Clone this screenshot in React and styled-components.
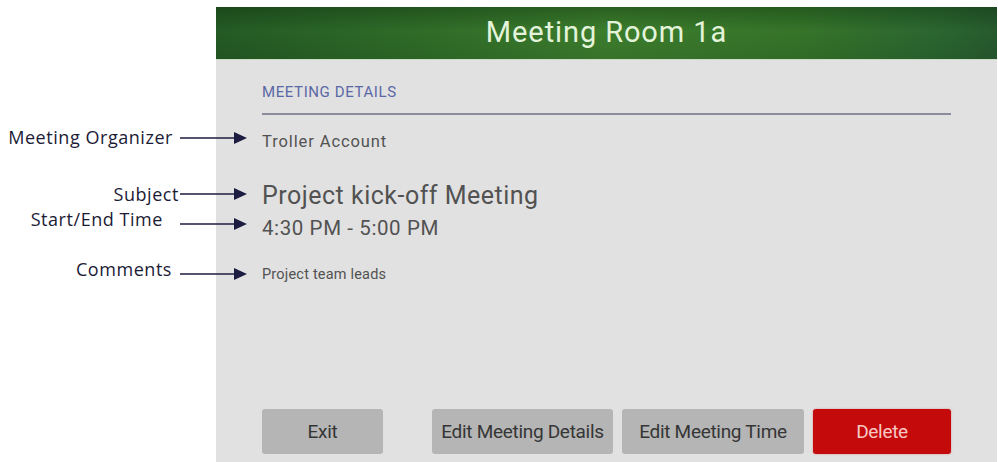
import styled, { createGlobalStyle } from 'styled-components';

const GlobalStyle = createGlobalStyle`
  html, body {
    margin: 0;
    padding: 0;
    background: #ffffff;
  }
  body {
    font-family: Roboto, "Liberation Sans", sans-serif;
    overflow: hidden;
  }
`

const fields = [
  { label: 'Meeting Organizer', text: 'Troller Account', size: 16.5, spacing: 0.9, height: 20, top: 17, gap: 7, dy: -4, ty: -1 },
  { label: 'Subject', text: 'Project kick-off Meeting', size: 25, spacing: 0.5, height: 30, top: 29, gap: 1, dy: -2, ty: 0 },
  { label: 'Start/End Time', text: '4:30 PM - 5:00 PM', size: 20.5, spacing: 0.6, height: 24, top: 5, gap: 17, dy: -4, ty: -5 },
  { label: 'Comments', text: 'Project team leads', size: 14.5, spacing: 0.2, height: 18, top: 26, gap: 8, dy: -1, ty: -5 },
]

function Arrow(){
  return (
    <svg width="67" height="14" viewBox="0 0 67 14">
      <line x1="0" y1="7" x2="56" y2="7" stroke="#1c1c40" strokeWidth="1.6" />
      <polygon points="54,1 67,7 54,13" fill="#1c1c40" />
    </svg>
  )
}

export default function App(){
  return (
    <>
      <GlobalStyle />
      <Page>
        <Panel>
          <Header>Meeting Room 1a</Header>
          <Body>
            <SectionTitle>MEETING DETAILS</SectionTitle>
            <Divider />
            {fields.map((f) => (
              <Field
                key={f.label}
                $size={f.size}
                $spacing={f.spacing}
                $height={f.height}
                $top={f.top}
              >
                <Callout $dy={f.dy}>
                  <CalloutLabel $gap={f.gap} $ty={f.ty}>{f.label}</CalloutLabel>
                  <Arrow />
                </Callout>
                {f.text}
              </Field>
            ))}
            <Actions>
              <Button $width={121}>Exit</Button>
              <ButtonGroup>
                <Button $width={181}>Edit Meeting Details</Button>
                <Button $width={182}>Edit Meeting Time</Button>
                <Button $width={138} $danger>Delete</Button>
              </ButtonGroup>
            </Actions>
          </Body>
        </Panel>
      </Page>
    </>
  )
}

const Page = styled.div`
  width: 998px;
  height: 462px;
  padding: 7px 0 0 216px;
  box-sizing: border-box;
`

const Panel = styled.div`
  width: 781px;
  height: 455px;
  background: #e1e1e1;
  display: flex;
  flex-direction: column;
`

const Header = styled.div`
  height: 53px;
  display: flex;
  align-items: center;
  justify-content: center;
  padding-bottom: 2px;
  box-sizing: border-box;
  color: #e4f4da;
  font-size: 29px;
  letter-spacing: 0.9px;
  background:
    linear-gradient(to bottom, rgba(10, 40, 10, 0.35), rgba(0, 0, 0, 0) 45%, rgba(0, 0, 0, 0.08)),
    linear-gradient(to right, #245a24 0%, #2f6b28 25%, #3c7d2d 50%, #357429 75%, #2b6630 92%, #275a2e 100%);
  border-bottom: 1px solid #c9dcc4;
`

const Body = styled.div`
  flex: 1;
  display: flex;
  flex-direction: column;
  padding: 22px 46px 8px 46px;
`

const SectionTitle = styled.div`
  font-size: 15px;
  line-height: 20px;
  color: #5a68a6;
  letter-spacing: 0.6px;
`

const Divider = styled.div`
  height: 1.5px;
  margin-top: 11px;
  background: #8a8c9c;
`

const Field = styled.div`
  position: relative;
  margin-top: ${(p) => p.$top}px;
  font-size: ${(p) => p.$size}px;
  line-height: ${(p) => p.$height}px;
  letter-spacing: ${(p) => p.$spacing}px;
  color: #525252;
`

const Callout = styled.div`
  position: absolute;
  right: calc(100% + 15px);
  top: 50%;
  transform: translateY(calc(-50% + ${(p) => p.$dy}px));
  display: flex;
  align-items: center;
  white-space: nowrap;
  letter-spacing: 0;
`

const CalloutLabel = styled.span`
  font-family: "Open Sans", "DejaVu Sans", sans-serif;
  font-size: 18px;
  line-height: 22px;
  letter-spacing: 0.55px;
  color: #1b1b36;
  margin-right: ${(p) => p.$gap}px;
  transform: translateY(${(p) => p.$ty}px);
`

const Actions = styled.div`
  margin-top: auto;
  display: flex;
  justify-content: space-between;
`

const ButtonGroup = styled.div`
  display: flex;
  gap: 9px;
`

const Button = styled.button`
  width: ${(p) => p.$width}px;
  height: 45px;
  border: none;
  border-radius: 3px;
  background: ${(p) => (p.$danger ? '#c50a0c' : '#b5b5b5')};
  color: ${(p) => (p.$danger ? '#f8c9c4' : '#353535')};
  font-family: Roboto, "Liberation Sans", sans-serif;
  font-size: 19px;
  letter-spacing: -0.3px;
  padding: 0;
  box-shadow: ${(p) => (p.$danger ? '0 0 2px rgba(200, 0, 0, 0.4)' : 'none')};
  cursor: pointer;
`
